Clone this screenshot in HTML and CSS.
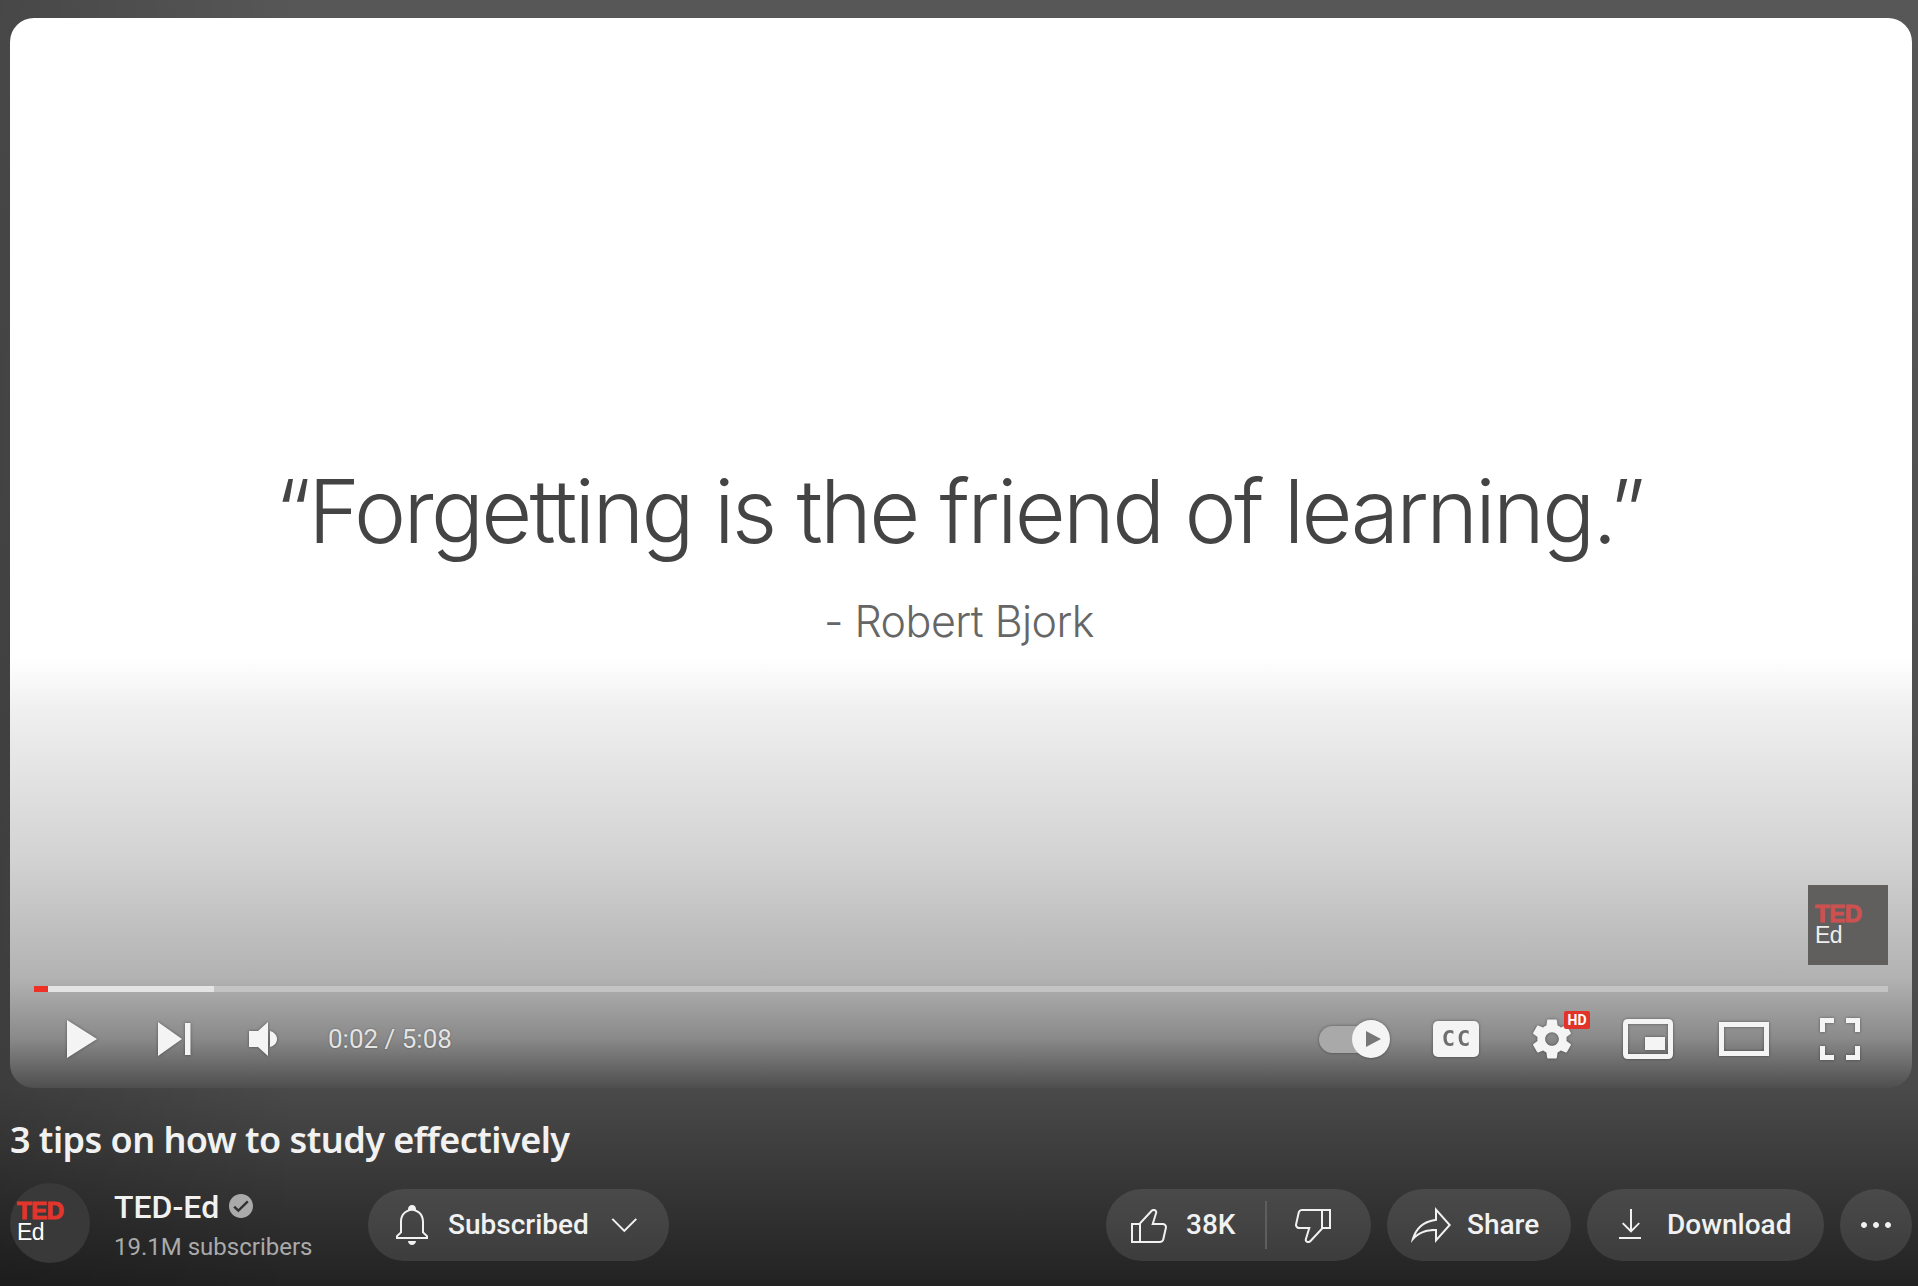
FILE: index.html
```html
<!DOCTYPE html>
<html>
<head>
<meta charset="UTF-8">
<title>3 tips on how to study effectively</title>
<link rel="stylesheet" href="styles.css">
</head>

<body>
<div class="page">
	<div class="player">
		<div class="slide">
			<p class="quote">“Forgetting is the friend of learning.”</p>
			<p class="author">- Robert Bjork</p>
		</div>
		<div class="watermark"><span class="logo-ted">TED</span><span class="logo-ed">Ed</span></div>
		<div class="progress"><span class="progress-buffer"></span><span class="progress-played"></span></div>
		<div class="controls">
			<svg class="ctl ctl-play" viewBox="0 0 34 44"><path d="M2 3 L32 22 L2 41 Z"/></svg>
			<svg class="ctl ctl-next" viewBox="0 0 38 44"><path d="M3 5 L27 22 L3 39 Z M30 6 H35.500 V38 H30 Z"/></svg>
			<svg class="ctl ctl-volume" viewBox="0 0 32 44"><path d="M1 14 H10 L20 5 V39 L10 30 H1 Z M22 14 C26 15 29 18 29 22 C29 26 26 29 22 30 Z"/></svg>
			<span class="time">0:02 / 5:08</span>
			<div class="controls-right">
				<div class="toggle"><span class="toggle-track"></span><span class="toggle-knob"><svg viewBox="0 0 38 38"><path d="M14 11 L29 19 L14 27 Z"/></svg></span></div>
				<div class="cc">CC</div>
				<div class="gear">
					<svg class="ctl" viewBox="9.800 9.200 16.400 17.600"><path fill-rule="evenodd" d="m 23.94,18.78 c .03,-0.25 .05,-0.51 .05,-0.78 0,-0.27 -0.02,-0.52 -0.05,-0.78 l 1.68,-1.32 c .15,-0.12 .19,-0.33 .09,-0.51 l -1.6,-2.76 c -0.09,-0.17 -0.31,-0.24 -0.48,-0.17 l -1.99,.8 c -0.41,-0.32 -0.86,-0.58 -1.35,-0.78 l -0.30,-2.12 c -0.02,-0.19 -0.19,-0.33 -0.39,-0.33 l -3.2,0 c -0.2,0 -0.36,.14 -0.39,.33 l -0.30,2.12 c -0.48,.2 -0.93,.47 -1.35,.78 l -1.99,-0.8 c -0.18,-0.07 -0.39,0 -0.48,.17 l -1.6,2.76 c -0.10,.17 -0.05,.39 .09,.51 l 1.68,1.32 c -0.03,.25 -0.05,.52 -0.05,.78 0,.26 .02,.52 .05,.78 l -1.68,1.32 c -0.15,.12 -0.19,.33 -0.09,.51 l 1.6,2.76 c .09,.17 .31,.24 .48,.17 l 1.99,-0.8 c .41,.32 .86,.58 1.35,.78 l .30,2.12 c .02,.19 .19,.33 .39,.33 l 3.2,0 c .2,0 .36,-0.14 .39,-0.33 l .30,-2.12 c .48,-0.2 .93,-0.47 1.35,-0.78 l 1.99,.8 c .18,.07 .39,0 .48,-0.17 l 1.6,-2.76 c .09,-0.17 .05,-0.39 -0.09,-0.51 l -1.68,-1.32 0,0 z m -5.94,2.01 c -1.54,0 -2.8,-1.25 -2.8,-2.8 0,-1.54 1.25,-2.8 2.8,-2.8 1.54,0 2.8,1.25 2.8,2.8 0,1.54 -1.25,2.8 -2.8,2.8 l 0,0 z"/></svg>
					<span class="hd">HD</span>
				</div>
				<svg class="ctl ctl-mini" viewBox="0 0 50 44"><path fill-rule="evenodd" d="M5 2 H45 Q50 2 50 7 V37 Q50 42 45 42 H5 Q0 42 0 37 V7 Q0 2 5 2 Z M5 7 V37 H45 V7 Z M22 20 H42 V33 H22 Z"/></svg>
				<svg class="ctl ctl-theatre" viewBox="0 0 52 44"><path fill-rule="evenodd" d="M1 5 H51 V39 H1 Z M6 10 V34 H46 V10 Z"/></svg>
				<svg class="ctl ctl-full" viewBox="0 0 44 44"><path d="M2 1 H16 V6 H7 V15 H2 Z M28 1 H42 V15 H37 V6 H28 Z M2 29 H7 V38 H16 V43 H2 Z M37 29 H42 V43 H28 V38 H37 Z"/></svg>
			</div>
		</div>
	</div>

	<h1 class="title">3 tips on how to study effectively</h1>

	<div class="actions">
		<div class="avatar"><span class="logo-ted">TED</span><span class="logo-ed">Ed</span></div>
		<div class="channel">
			<div class="channel-name">TED-Ed <svg class="verified" viewBox="2 2 20 20"><path d="M12 2C6.500 2 2 6.500 2 12s4.500 10 10 10 10-4.500 10-10S17.500 2 12 2zM9.800 17.300l-4.200-4.100L7 11.800l2.800 2.700L17 7.400l1.400 1.400-8.600 8.500z"/></svg></div>
			<div class="channel-subs">19.1M subscribers</div>
		</div>
		<div class="pill pill-sub">
			<svg class="ico" viewBox="0 0 24 24"><path d="M10 20h4c0 1.100-.9 2-2 2s-2-.9-2-2zm10-2.650V19H4v-1.650l2-1.880v-5.150C6 7.400 7.560 5.100 10 4.340v-.38c0-1.420 1.490-2.500 2.990-1.760.65.320 1.010 1.030 1.010 1.760v.39c2.440.750 4 3.060 4 5.980v5.150l2 1.870zm-1 .420-2-1.880v-5.470c0-2.470-1.190-4.360-3.130-5.100-1.260-.530-2.640-.5-3.840.030C8.150 6.110 7 7.990 7 10.420v5.470l-2 1.880V18h14v-.23z"/></svg>
			<span class="pill-text">Subscribed</span>
			<svg class="ico ico-chevron" viewBox="0 0 24 24"><path d="m18 9.280-6.350 6.350-6.350-6.350.7-.71 5.650 5.650 5.650-5.650z"/></svg>
		</div>
		<div class="actions-right">
			<div class="pill pill-like">
				<svg class="ico" viewBox="0 0 24 24"><path d="M18.770 11h-4.230l1.520-4.940C16.380 5.030 15.540 4 14.380 4c-.58 0-1.140.24-1.520.65L7 11H3v10h4h1h9.430c1.060 0 1.980-.67 2.190-1.610l1.340-6C21.230 12.150 20.180 11 18.770 11zM7 20H4v-8h3V20zM19.980 13.170l-1.340 6C18.540 19.650 18.030 20 17.430 20H8v-8.610l5.600-6.060C13.790 5.120 14.080 5 14.380 5c.26 0 .5.11.63.3.07.1.15.26.09.47l-1.520 4.940L13.180 12h1.350h4.230c.41 0 .8.17 1.030.46C19.920 12.610 20.050 12.860 19.980 13.170z"/></svg>
				<span class="pill-text like-count">38K</span>
				<span class="like-sep"></span>
				<svg class="ico" viewBox="0 0 24 24"><path d="M17,4h-1H6.570C5.500,4,4.590,4.670,4.380,5.610l-1.340,6C2.770,12.850,3.820,14,5.230,14h4.230l-1.520,4.940C7.620,19.970,8.460,21,9.620,21 c.58,0,1.140-.24,1.520-.65L17,14h4V4H17z M10.400,19.670C10.210,19.880,9.920,20,9.620,20c-.26,0-.5-.11-.63-.3c-.07-.1-.15-.26-.09-.47 l1.520-4.940l.4-1.290H9.460H5.230c-.41,0-.8-.17-1.030-.46c-.12-.15-.25-.4-.18-.72l1.340-6C5.460,5.350,5.970,5,6.570,5H16v8.610L10.400,19.670z M20,13h-3V5h3V13z"/></svg>
			</div>
			<div class="pill pill-share">
				<svg class="ico" viewBox="0 0 24 24"><path d="M15 5.630 20.660 12 15 18.370V14h-1c-3.960 0-7.140 1-9.750 3.090 1.840-4.070 5.110-6.400 9.890-7.100l.86-.13V5.630M14 3v6C6.220 10.130 3.110 15.330 2 21c2.780-3.970 6.440-6 12-6v6l8-9-8-9z"/></svg>
				<span class="pill-text">Share</span>
			</div>
			<div class="pill pill-download">
				<svg class="ico" viewBox="0 0 24 24"><path d="M17 18v1H6v-1h11zm-.5-6.600-.7-.7-3.300 3.300V4h-1v10l-3.300-3.300-.7.7 4.500 4.500 4.500-4.600z"/></svg>
				<span class="pill-text">Download</span>
			</div>
			<div class="pill pill-more">
				<svg class="ico" viewBox="0 0 24 24"><path d="M7.500 12c0 .83-.67 1.500-1.500 1.500s-1.500-.67-1.500-1.500.67-1.500 1.500-1.500 1.500.67 1.500 1.500zm4.500-1.500c-.83 0-1.500.67-1.500 1.500s.67 1.500 1.500 1.500 1.500-.67 1.500-1.500-.67-1.500-1.500-1.500zm6 0c-.83 0-1.500.67-1.500 1.500s.67 1.500 1.500 1.500 1.500-.67 1.500-1.500-.67-1.500-1.500-1.500z"/></svg>
			</div>
		</div>
	</div>
</div>
</body>
</html>
```

FILE: styles.css
```css
*{ margin:0; padding:0; box-sizing:border-box;}
html,body{ height:100%;}
body{ background:linear-gradient(to bottom,#575757 0,#4a4a4a 1088px,#222 1286px); font-family:Roboto,"Liberation Sans",sans-serif; color:#f1f1f1; overflow:hidden;}
.page{ height:1286px; padding:18px 6px 0 10px; background:linear-gradient(to right,rgba(0,0,0,.18) 0,rgba(0,0,0,0) 300px);}

.player{ position:relative; height:1070px; border-radius:24px; overflow:hidden; background:linear-gradient(to bottom,#fff 640px,#f0f0f0 690px,#d2d2d2 842px,#b2b2b2 960px,#8a8a8a 1020px,#4e4e4e 1070px);}
.slide{ padding-top:443px; text-align:center; padding-right:4px;}
.quote{ font-family:Inter,"Liberation Sans",sans-serif; font-size:88px; line-height:100px; font-weight:300; color:#444; letter-spacing:-2.7px;}
.author{ margin-top:35px; font-family:Inter,"Liberation Sans",sans-serif; font-size:43px; line-height:50px; font-weight:300; color:#666; letter-spacing:-.55px;}

.watermark{ position:absolute; right:24px; top:867px; width:80px; height:80px; padding:19px 0 0 7px; background:#605f5e;}
.logo-ted{ display:block; font-family:"Liberation Sans",sans-serif; font-weight:bold; font-size:24px; line-height:20px; letter-spacing:-.5px; color:#cd5150; -webkit-text-stroke:1px currentColor;}
.logo-ed{ display:block; font-family:"Liberation Sans",sans-serif; font-size:23px; line-height:22px; letter-spacing:-.5px; color:#eee;}

.progress{ position:absolute; left:24px; right:24px; top:968px; height:6px; background:rgba(255,255,255,.3);}
.progress-buffer{ position:absolute; left:0; top:0; width:180px; height:6px; background:rgba(255,255,255,.55);}
.progress-played{ position:absolute; left:0; top:0; width:14px; height:6px; background:#ee3124;}

.controls{ position:absolute; left:0; right:0; bottom:27px; height:44px; display:flex; align-items:center; padding:0 50px 0 55px;}
.ctl{ display:block; height:44px; fill:#f4f4f4; filter:drop-shadow(0 0 1.5px rgba(0,0,0,.4)); overflow:visible;}
.ctl-play{ width:34px;}
.ctl-next{ width:38px; margin-left:56px;}
.ctl-volume{ width:32px; margin-left:55px;}
.time{ margin-left:48px; font-size:26px; color:#e4e4e4; text-shadow:0 0 2px rgba(0,0,0,.4);}
.controls-right{ margin-left:auto; display:flex; align-items:center;}

.toggle{ position:relative; width:71px; height:40px; filter:drop-shadow(0 0 1.5px rgba(0,0,0,.4));}
.toggle-track{ position:absolute; left:0; top:7px; width:50px; height:27px; border-radius:14px; background:#a9a9a9;}
.toggle-knob{ position:absolute; right:0; top:1px; width:38px; height:38px; border-radius:50%; background:#f4f4f4;}
.toggle-knob svg{ display:block; width:38px; height:38px; fill:#777;}

.cc{ width:46px; height:36px; margin-left:43px; border-radius:5px; background:#f4f4f4; color:#6e6e6e; font-family:"DejaVu Sans Mono",monospace; font-weight:bold; font-size:22px; line-height:35px; text-align:center; letter-spacing:2px; padding-left:2px; filter:drop-shadow(0 0 1.5px rgba(0,0,0,.4));}

.gear{ position:relative; width:40px; height:44px; margin-left:53px;}
.gear .ctl{ width:40px;}
.hd{ position:absolute; left:32px; top:-6px; width:26px; height:18px; border-radius:2px; background:#e1332a; color:#fff; font-size:14px; line-height:18px; font-weight:bold; text-align:center;}

.ctl-mini{ width:50px; margin-left:51px;}
.ctl-theatre{ width:52px; margin-left:45px;}
.ctl-full{ width:44px; margin-left:48px;}

.title{ margin-top:28px; font-family:"Noto Sans",sans-serif; font-size:36px; line-height:48px; font-weight:600; letter-spacing:-.55px; color:#f1f1f1;}

.actions{ margin-top:19px; display:flex; align-items:flex-start;}
.avatar{ width:80px; height:80px; padding:18px 0 0 7px; border-radius:50%; background:#3a3939;}
.avatar .logo-ted{ color:#e2352b;}
.avatar .logo-ed{ color:#fff;}
.channel{ width:254px; margin-left:24px;}
.channel-name{ display:flex; align-items:center; gap:10px; font-size:32px; line-height:44px; font-weight:500; padding-top:2px;}
.verified{ width:24px; height:24px; fill:#aaa; margin-top:-2px;}
.channel-subs{ margin-top:3px; font-size:24px; line-height:30px; color:#aaa;}

.pill{ height:72px; margin-top:6px; display:flex; align-items:center; border-radius:36px; background:rgba(255,255,255,.1);}
.ico{ display:block; width:48px; height:48px; flex:none; fill:#f1f1f1;}
.pill-text{ font-size:28px; font-weight:500; white-space:nowrap; margin-top:-2px;}
.pill-sub{ width:301px; padding-left:20px;}
.pill-sub .pill-text{ margin-left:12px; width:153px;}
.actions-right{ margin-left:auto; display:flex; gap:16px;}
.pill-like{ width:265px; padding-left:19px;}
.like-count{ margin-left:13px; width:50px;}
.like-sep{ width:2px; height:48px; margin:0 22px 0 29px; background:#5e5e5e;}
.pill-share{ width:184px; padding-left:20px;}
.pill-share .pill-text{ margin-left:12px;}
.pill-download{ width:237px; padding-left:20px;}
.pill-download .pill-text{ margin-left:12px;}
.pill-more{ width:72px; justify-content:center;}
```
